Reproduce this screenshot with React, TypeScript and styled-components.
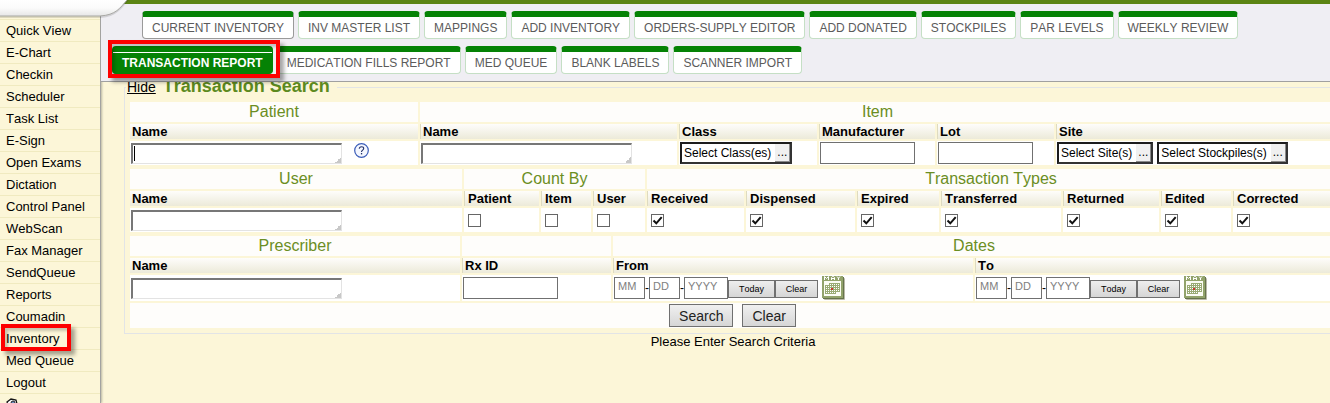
import React from "react";
import styled, { createGlobalStyle } from "styled-components";

const GlobalStyle = createGlobalStyle`
  *, *::before, *::after { box-sizing: border-box; font-kerning: none; }
  body {
    margin: 0;
    background: #fcf6d8;
    color: #000;
    font-family: Arial, "Liberation Sans", sans-serif;
    font-size: 12px;
  }
`;

const Page = styled.div`
  position: relative;
  display: flex;
  height: 100vh;
  overflow: hidden;
`;

const LogoTab = styled.svg`
  position: absolute;
  z-index: 2;
  top: 0;
  left: 0;
`;

const Sidebar = styled.nav`
  flex: 0 0 101px;
  overflow: hidden;
  padding-top: 19px;
  border-right: 1px solid #a3a3a0;
  box-shadow: 1px 0 2px #b9b6a2;
`;

const SideLink = styled.a`
  display: block;
  height: 22px;
  padding-left: 6px;
  border-top: 1px solid #f0eac0;
  font-size: 13px;
  line-height: 21px;
  color: #000;
  text-decoration: none;
  white-space: nowrap;
`;

const SideIcon = styled.svg`
  display: block;
  margin-top: 4px;
`;

const Marked = styled.span`
  position: relative;
`;

const RedBox = styled.span<{ $wide?: boolean }>`
  position: absolute;
  top: ${(p) => (p.$wide ? "-12px" : "-7px")};
  right: ${(p) => (p.$wide ? "-8px" : "-12px")};
  bottom: -5px;
  left: -5px;
  border: 4px solid #fe0000;
  box-shadow: 4px 4px 4px rgba(0, 0, 0, 0.35), inset 3px 3px 3px rgba(0, 0, 0, 0.2);
  pointer-events: none;
`;

const Main = styled.main`
  flex: 1 1 0;
  min-width: 0;
`;

const Header = styled.header`
  position: relative;
  z-index: 1;
  display: flex;
  flex-direction: column;
  gap: 7px;
  padding: 7px 0 7px 11px;
  border-top: 4px solid #5b8413;
  border-bottom: 1px solid #a0a0a0;
  background: #efeef3;
`;

const TabRow = styled.div<{ $indent?: boolean }>`
  display: flex;
  gap: 4px;
  padding-left: ${(p) => (p.$indent ? "30px" : "0")};
`;

const tabEdge = { outlined: "#9a9a9a", active: "#058205", plain: "#c5dfc5" };

const Tab = styled.button<{ $kind: "outlined" | "active" | "plain" }>`
  position: relative;
  z-index: ${(p) => (p.$kind === "active" ? 1 : 0)};
  height: 28px;
  padding: 0 9px;
  border: 1px solid ${(p) => tabEdge[p.$kind]};
  border-top: 6px solid #058205;
  border-radius: 4px;
  background: ${(p) => (p.$kind === "active" ? "#058205" : "#fff")};
  box-shadow: ${(p) => (p.$kind === "active" ? "inset 0 1px 0 #fff" : "none")};
  color: ${(p) => (p.$kind === "active" ? "#fff" : "#5b5b5b")};
  font-family: inherit;
  font-size: 12px;
  font-weight: ${(p) => (p.$kind === "active" ? "bold" : "normal")};
  line-height: 20px;
  white-space: nowrap;
`;

const Content = styled.div`
  margin-right: -12px;
  padding-left: 23px;
`;

const SearchSet = styled.fieldset`
  min-width: 0;
  margin: -6px 0 0;
  padding: 2px 4px 3px 3px;
  border: 1px solid #e2e4e6;
`;

const Legend = styled.legend`
  margin-left: -2px;
  padding: 0 7px 0 0;
  line-height: 20px;
`;

const HideLink = styled.a`
  margin: 0 7px 0 1px;
  font-size: 14px;
  color: #000;
`;

const Title = styled.span`
  font-size: 18px;
  font-weight: bold;
  color: #5d8a1e;
`;

const Grid = styled.table`
  width: 100%;
  table-layout: fixed;
  border-collapse: separate;
  border-spacing: 2px;
`;

const Group = styled.th`
  height: 20px;
  padding: 0;
  background: #fefdfb;
  color: #6b8e23;
  font-size: 16px;
  font-weight: normal;
  line-height: 20px;
`;

const Head = styled.th<{ $wide?: boolean }>`
  height: 15px;
  padding: 0 0 0 ${(p) => (p.$wide ? "3px" : "2px")};
  border-left: 1px solid #dedbc0;
  background: linear-gradient(#fefdfb, #ecead9);
  font-size: 13px;
  line-height: 15px;
  text-align: left;
  white-space: nowrap;

  &:first-child {
    border-left: 0;
  }
`;

const Cell = styled.td<{ $tall?: boolean; $wide?: boolean }>`
  height: ${(p) => (p.$tall ? "26px" : "24px")};
  padding: 0 ${(p) => (p.$wide ? "4px" : "1px")};
  background: #fff;
`;

const ActionCell = styled.td`
  height: 25px;
  padding: 0;
  background: #fefdfb;
`;

const Line = styled.div<{ $gap?: number; $center?: boolean }>`
  display: flex;
  align-items: center;
  justify-content: ${(p) => (p.$center ? "center" : "flex-start")};
  gap: ${(p) => p.$gap ?? 0}px;
`;

const NameBox = styled.textarea<{ $caret?: boolean }>`
  display: block;
  width: 211px;
  height: 21px;
  padding: 1px 2px;
  border: 2px solid;
  border-width: 2px 1px 1px 2px;
  border-color: #777 #e3e3e3 #e3e3e3 #777;
  background:
    linear-gradient(135deg, transparent 50%, #c8c8c8 50%) right bottom / 6px 6px no-repeat,
    linear-gradient(${(p) => (p.$caret ? "#000, #000" : "#fff, #fff")}) 1px 1px / 1px 15px no-repeat,
    #fff;
  font: 12px/14px Arial, "Liberation Sans", sans-serif;
  overflow: hidden;
  resize: none;
`;

const TextBox = styled.input`
  display: block;
  width: 95px;
  height: 22px;
  border: 1px solid #707070;
  background: #fff;
`;

const HelpButton = styled.button`
  width: 15px;
  height: 15px;
  margin: -6px 0 0 12px;
  padding: 0;
  border: 0;
  background: none;
`;

const Picker = styled.button`
  display: flex;
  align-items: center;
  gap: 4px;
  height: 22px;
  padding: 0 0 0 2px;
  border: 2px solid;
  border-color: #1c1c1c #333 #333 #1c1c1c;
  background: #fff;
  color: #000;
  font-family: inherit;
  font-size: 12px;
  line-height: 18px;
  white-space: nowrap;
`;

const PickerDots = styled.span`
  width: 15px;
  height: 18px;
  border-right: 1px solid #8a8a8a;
  border-bottom: 1px solid #8a8a8a;
  background: #f0f0f0;
  line-height: 17px;
  text-align: center;
`;

const TickBox = styled.span`
  display: grid;
  width: 13px;
  height: 13px;

  & > * {
    grid-area: 1 / 1;
  }
`;

const Tick = styled.input`
  appearance: none;
  width: 13px;
  height: 13px;
  margin: 0;
  border: 1px solid #666;
  background: #fff;

  & + svg {
    visibility: hidden;
    pointer-events: none;
  }
  &:checked + svg {
    visibility: visible;
  }
`;

const DateBox = styled.input<{ $year?: boolean }>`
  width: ${(p) => (p.$year ? "44px" : "31px")};
  height: 22px;
  padding: 0 3px 5px;
  border: 1px solid #707070;
  background: #fff;
  font-family: inherit;
  font-size: 11px;

  &::placeholder {
    color: #808080;
  }
`;

const Dash = styled.span`
  width: 4px;
  text-align: center;
`;

const SmallButton = styled.button<{ $w: number }>`
  width: ${(p) => p.$w}px;
  height: 18px;
  margin-top: 1px;
  padding: 0;
  border: 1px solid #707070;
  background: linear-gradient(#eee, #d6d6d6);
  color: #000;
  font-family: inherit;
  font-size: 9px;
  line-height: 16px;
`;

const IconButton = styled.button`
  width: 24px;
  height: 24px;
  margin-left: 4px;
  padding: 0;
  border: 0;
  background: none;
`;

const ActionButton = styled.button`
  height: 23px;
  padding: 0 9px;
  border: 1px solid #707070;
  background: linear-gradient(#f0f0f0, #d6d6d6);
  color: #222;
  font-family: inherit;
  font-size: 14px;
  line-height: 20px;
`;

const Message = styled.p`
  margin: 0;
  font-size: 13px;
  line-height: 16px;
  text-align: center;
`;

const links = [
  "Quick View", "E-Chart", "Checkin", "Scheduler", "Task List", "E-Sign", "Open Exams", "Dictation",
  "Control Panel", "WebScan", "Fax Manager", "SendQueue", "Reports", "Coumadin", "Inventory", "Med Queue", "Logout",
];

const topTabs = [
  "CURRENT INVENTORY", "INV MASTER LIST", "MAPPINGS", "ADD INVENTORY", "ORDERS-SUPPLY EDITOR",
  "ADD DONATED", "STOCKPILES", "PAR LEVELS", "WEEKLY REVIEW",
];

const reportTabs = ["TRANSACTION REPORT", "MEDICATION FILLS REPORT", "MED QUEUE", "BLANK LABELS", "SCANNER IMPORT"];

const countBy = ["Patient", "Item", "User"];
const types = ["Received", "Dispensed", "Expired", "Transferred", "Returned", "Edited", "Corrected"];

function Columns({ widths }: { widths: number[] }) {
  return (
    <colgroup>
      {widths.map((w, i) => <col key={i} width={w} />)}
      <col />
    </colgroup>
  );
}

function HelpIcon() {
  return (
    <svg width="15" height="15" viewBox="0 0 15 15" fill="none" display="block">
      <circle cx="7.5" cy="7.5" r="6.8" fill="#f4f7ff" stroke="#3a5cb8" strokeWidth="1.2" />
      <path d="M5.3 5.8C5.3 4.500 6.1 3.8 7.5 3.800s2.2.7 2.200 1.800c0 1.500-2.200 1.600-2.200 3.300" stroke="#24326a" strokeWidth="1.1" />
      <rect x="6.9" y="10" width="1.3" height="1.4" fill="#24326a" />
    </svg>
  );
}

function CalendarIcon() {
  const dots = [];
  for (let y = 0; y < 5; y++) {
    for (let x = 0; x < 7; x++) {
      if ((y === 0 && x < 2) || (y === 4 && x > 4)) continue;
      dots.push(<rect key={`${x}-${y}`} x={4 + x * 2} y={8 + y * 2} width="1" height="1" fill="#fff" />);
    }
  }
  return (
    <svg width="24" height="24" viewBox="0 0 24 24" display="block">
      <rect x="2" y="2" width="21" height="22" rx="1" fill="#b9b9a8" />
      <rect x="1" y="1" width="21" height="22" fill="#66734c" />
      <rect x="0" y="0" width="21" height="22" fill="#92a36b" />
      <rect x="2" y="5" width="17" height="15" fill="#fbfcf4" />
      <path d="M7 7h11v9h-4v2H3V9h4z" fill="#9aab74" />
      {dots}
      <rect x="9" y="12" width="2" height="2" fill="#c8372c" />
      <path d="M2.500 4V.5l2 2 2-2V4M9.500 4V1.500l1-1h1l1 1V4M9.500 2.500h3M15 .5l1.500 1.700L18 .5M16.500 2v2" fill="none" stroke="#fff" />
    </svg>
  );
}

function TickCell({ name, checked }: { name: string; checked?: boolean }) {
  return (
    <Cell $wide>
      <TickBox>
        <Tick type="checkbox" aria-label={name} defaultChecked={checked} />
        <svg width="13" height="13" viewBox="0 0 13 13" fill="none">
          <path d="M2.500 6.500L5.300 9.300L10.700 3.200" stroke="#111" strokeWidth="2" />
        </svg>
      </TickBox>
    </Cell>
  );
}

function DateCell({ name }: { name: string }) {
  return (
    <Cell $tall>
      <Line>
        <DateBox placeholder="MM" aria-label={`${name} month`} />
        <Dash>-</Dash>
        <DateBox placeholder="DD" aria-label={`${name} day`} />
        <Dash>-</Dash>
        <DateBox $year placeholder="YYYY" aria-label={`${name} year`} />
        <SmallButton type="button" $w={47}>Today</SmallButton>
        <SmallButton type="button" $w={43}>Clear</SmallButton>
        <IconButton type="button" aria-label={`${name} calendar`}><CalendarIcon /></IconButton>
      </Line>
    </Cell>
  );
}

function PickerBox({ children }: { children: string }) {
  return (
    <Picker type="button">
      {children}
      <PickerDots>...</PickerDots>
    </Picker>
  );
}

export default function App() {
  return (
    <Page>
      <GlobalStyle />
      <Sidebar>
        {links.map((l) => (
          <SideLink key={l} href="#">
            {l === "Inventory" ? <Marked>{l}<RedBox /></Marked> : l}
          </SideLink>
        ))}
        <SideLink href="#" aria-label="Support">
          <SideIcon width="12" height="14" viewBox="0 0 12 14">
            <path d="M1 4L5 1l5 1 1 4-2 2H3z" fill="#fff" stroke="#151515" strokeWidth="1.300" />
            <circle cx="7" cy="5" r="2" fill="#6b8fc4" stroke="#222" />
          </SideIcon>
        </SideLink>
      </Sidebar>
      <Main>
        <Header>
          <TabRow $indent>
            {topTabs.map((t, i) => <Tab key={t} type="button" $kind={i ? "plain" : "outlined"}>{t}</Tab>)}
          </TabRow>
          <TabRow>
            {reportTabs.map((t, i) => (
              <Tab key={t} type="button" $kind={i ? "plain" : "active"}>{t}{i === 0 && <RedBox $wide />}</Tab>
            ))}
          </TabRow>
        </Header>
        <Content>
          <SearchSet>
            <Legend><HideLink href="#">Hide</HideLink><Title>Transaction Search</Title></Legend>
            <Grid>
              <Columns widths={[288, 257, 138, 116, 117]} />
              <thead>
                <tr><Group>Patient</Group><Group colSpan={5}>Item</Group></tr>
                <tr><Head>Name</Head><Head>Name</Head><Head>Class</Head><Head>Manufacturer</Head><Head>Lot</Head><Head>Site</Head></tr>
              </thead>
              <tbody>
                <tr>
                  <Cell>
                    <Line>
                      <NameBox $caret aria-label="Patient name" />
                      <HelpButton type="button" aria-label="Help"><HelpIcon /></HelpButton>
                    </Line>
                  </Cell>
                  <Cell><NameBox aria-label="Item name" /></Cell>
                  <Cell><Line><PickerBox>Select Class(es)</PickerBox></Line></Cell>
                  <Cell><TextBox aria-label="Manufacturer" /></Cell>
                  <Cell><TextBox aria-label="Lot" /></Cell>
                  <Cell><Line $gap={4}><PickerBox>Select Site(s)</PickerBox><PickerBox>Select Stockpiles(s)</PickerBox></Line></Cell>
                </tr>
              </tbody>
            </Grid>
            <Grid>
              <Columns widths={[332, 75, 50, 52, 97, 109, 82, 120, 96, 70]} />
              <thead>
                <tr><Group>User</Group><Group colSpan={3}>Count By</Group><Group colSpan={7}>Transaction Types</Group></tr>
                <tr><Head>Name</Head>{[...countBy, ...types].map((t) => <Head key={t} $wide>{t}</Head>)}</tr>
              </thead>
              <tbody>
                <tr>
                  <Cell><NameBox aria-label="User name" /></Cell>
                  {countBy.map((t) => <TickCell key={t} name={t} />)}
                  {types.map((t) => <TickCell key={t} name={t} checked />)}
                </tr>
              </tbody>
            </Grid>
            <Grid>
              <Columns widths={[330, 149, 360]} />
              <thead>
                <tr><Group>Prescriber</Group><Group /><Group colSpan={2}>Dates</Group></tr>
                <tr><Head>Name</Head><Head>Rx ID</Head><Head>From</Head><Head>To</Head></tr>
              </thead>
              <tbody>
                <tr>
                  <Cell $tall><NameBox aria-label="Prescriber name" /></Cell>
                  <Cell $tall><TextBox aria-label="Rx ID" /></Cell>
                  <DateCell name="From" />
                  <DateCell name="To" />
                </tr>
                <tr>
                  <ActionCell colSpan={4}>
                    <Line $center $gap={9}>
                      <ActionButton type="button">Search</ActionButton>
                      <ActionButton type="button">Clear</ActionButton>
                    </Line>
                  </ActionCell>
                </tr>
              </tbody>
            </Grid>
          </SearchSet>
          <Message>Please Enter Search Criteria</Message>
        </Content>
      </Main>
      <LogoTab width="132" height="22" viewBox="0 0 132 22">
        <defs>
          <linearGradient id="tabFill" x1="0" y1="0" x2="0" y2="1">
            <stop offset="0" stopColor="#fff" />
            <stop offset=".5" stopColor="#fbfbfb" />
            <stop offset="1" stopColor="#e6e6e6" />
          </linearGradient>
        </defs>
        <path d="M0 18H101C116 17 121 9 129 0H120L98 15H0z" fill="#000" opacity=".12" />
        <path d="M0 0H127C120 8 116 15 100 16H0z" fill="url(#tabFill)" />
        <path d="M127 0C120 8 116 15 100 16H0" fill="none" stroke="#a8a8a4" />
      </LogoTab>
    </Page>
  );
}
